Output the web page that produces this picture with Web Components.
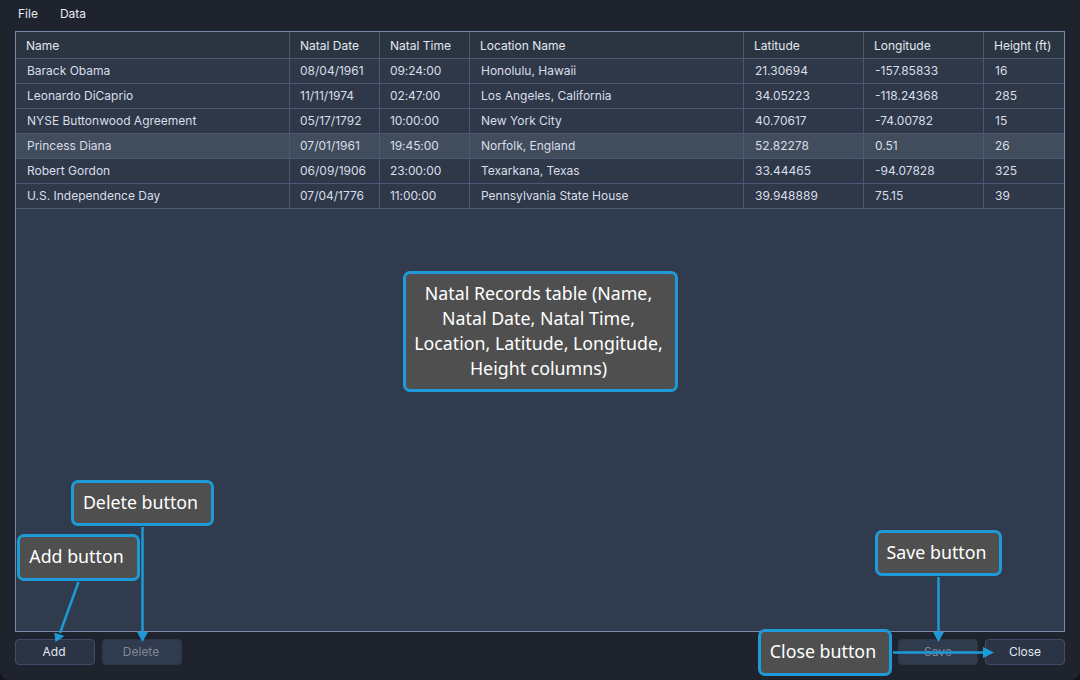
<!DOCTYPE html>
<html lang="en"><head><meta charset="utf-8"><title>Natal Records</title>
<style>
html,body{margin:0;padding:0;width:1080px;height:680px;overflow:hidden;background:#12151a}
</style></head><body>
<app-window>
  <menu-bar slot="menu"><menu-item>File</menu-item><menu-item>Data</menu-item></menu-bar>
  <records-table slot="table"></records-table>
  <app-button slot="left">Add</app-button>
  <app-button slot="left" disabled>Delete</app-button>
  <app-button slot="right" disabled>Save</app-button>
  <app-button slot="right">Close</app-button>
</app-window>
<annotation-layer></annotation-layer>
<script>
const COLS=[274,90,90,274,120,120,80];
const tpl=(css,html)=>`<style>${css}</style>${html}`;
class Base extends HTMLElement{
  constructor(){super();this.attachShadow({mode:'open'}).innerHTML=this.constructor.markup;}
}
class AppWindow extends Base{static markup=tpl(`
  :host{display:flex;flex-direction:column;box-sizing:border-box;width:1080px;height:680px;background:#1f232d;border-radius:0 0 9px 9px;color:#e3e7ef;font:12px Inter,sans-serif}
  .table{flex:1;display:flex;min-height:0;padding:0 15px}
  .table ::slotted(*){flex:1}
  footer{display:flex;justify-content:space-between;padding:7px 15px 15px}
  .g{display:flex;gap:7px}
`,`<slot name="menu"></slot><div class="table"><slot name="table"></slot></div>
  <footer><div class="g"><slot name="left"></slot></div><div class="g"><slot name="right"></slot></div></footer>`);}
class MenuBar extends Base{static markup=tpl(`:host{display:flex;height:31px;box-sizing:border-box;padding:0 0 5px 7px;align-items:center}`,`<slot></slot>`);}
class MenuItem extends Base{static markup=tpl(`:host{display:block;padding:0 11px;font:12px Inter,sans-serif;color:#e6e9f0}`,`<slot></slot>`);}
class AppButton extends Base{static markup=tpl(`
  :host{display:flex;align-items:center;justify-content:center;box-sizing:border-box;width:80px;height:26px;padding-bottom:2px;border:1px solid #414e68;border-radius:4px;background:#2a3444;color:#e3e7ef;font:12px Inter,sans-serif}
  :host([slot=left]){padding-right:2px}
  :host([disabled]){background:#303b4d;border-color:#2c3646;color:#7f8896}
`,`<slot></slot>`);}
class RecordRow extends Base{static markup=tpl(`
  :host{display:grid;grid-template-columns:var(--cols);height:25px;box-sizing:border-box;border-bottom:1px solid #4b5774;background:#2e3848;color:#d9dee8;--pb:2px}
  :host([head]){height:27px;background:#2b3542;color:#e3e7ef;--pb:0px}
  :host([selected]){background:#414c5c}
`,`<slot></slot>`);}
class RecordCell extends Base{static markup=tpl(`
  :host{display:flex;align-items:center;box-sizing:border-box;padding-left:var(--pad,10px);padding-bottom:var(--pb);border-right:1px solid #4b5774;font:12px Inter,sans-serif;white-space:nowrap;overflow:hidden;letter-spacing:var(--ls,0)}
  :host(:last-child){border-right:0}
`,`<slot></slot>`);}
class RecordsTable extends Base{
  static markup=tpl(`:host{display:block;box-sizing:border-box;border:1px solid #7987a8;background:#303b4d;--cols:${COLS.map(c=>c+'px').join(' ')}}`,`<slot></slot>`);
  connectedCallback(){
    const H=['Name','Natal Date','Natal Time','Location Name','Latitude','Longitude','Height (ft)'];
    const R=[['Barack Obama','08/04/1961','09:24:00','Honolulu, Hawaii','21.30694','-157.85833','16'],
    ['Leonardo DiCaprio','11/11/1974','02:47:00','Los Angeles, California','34.05223','-118.24368','285'],
    ['NYSE Buttonwood Agreement','05/17/1792','10:00:00','New York City','40.70617','-74.00782','15'],
    ['Princess Diana','07/01/1961','19:45:00','Norfolk, England','52.82278','0.51','26'],
    ['Robert Gordon','06/09/1906','23:00:00','Texarkana, Texas','33.44465','-94.07828','325'],
    ['U.S. Independence Day','07/04/1776','11:00:00','Pennsylvania State House','39.948889','75.15','39']];
    const cells=(a,row)=>a.map((t,i)=>{
      const narrow=row&&(i==1||i==2);
      return `<record-cell style="--pad:${row&&!narrow?11:10}px${row&&i==2?';--ls:-.1px':''}">${t}</record-cell>`;
    }).join('');
    this.innerHTML=`<record-row head>${cells(H,0)}</record-row>`+R.map((r,i)=>`<record-row${i==3?' selected':''}>${cells(r,1)}</record-row>`).join('');
  }
}
class CalloutBox extends Base{static markup=tpl(`
  :host{position:absolute;display:flex;align-items:center;justify-content:center;box-sizing:border-box;padding:0 4px 2px 0;border:3px solid #1e9ad8;border-radius:7px;background:#4f4f4f;color:#fff;font:17.8px/25px "Noto Sans","Open Sans",sans-serif;text-align:center;white-space:nowrap}
`,`<slot></slot>`);}
class AnnotationLayer extends Base{
  static markup=tpl(`:host{position:absolute;left:0;top:0;width:1080px;height:680px;display:block}
  svg{position:absolute;left:0;top:0}`,`<svg width="1080" height="680" viewBox="0 0 1080 680" fill="none">
   <g stroke="#1e9ad8" stroke-width="2.5">
    <path d="M78.500 582L60 633"/><path d="M142.500 527V633"/><path d="M938.500 577V633"/><path d="M893 652.500H984"/>
   </g>
   <g fill="#1e9ad8">
    <path d="M55.500 642L54.300 632.800L64.500 636Z"/><path d="M142.500 642L137 632H148Z"/><path d="M938.500 642L933 632H944Z"/><path d="M994 652.500L983 647V658Z"/>
   </g></svg><slot></slot>`);
  connectedCallback(){
    const B=[[403,271,275,121,'Natal Records table (Name,<br>Natal Date, Natal Time,<br>Location, Latitude, Longitude,<br>Height columns)'],
    [71,480,143,46,'Delete button'],[17,534,123,47,'Add button'],[875,530,127,46,'Save button'],[758,629,134,47,'Close button']];
    this.innerHTML=B.map(b=>`<callout-box style="left:${b[0]}px;top:${b[1]}px;width:${b[2]}px;height:${b[3]}px">${b[4]}</callout-box>`).join('');
  }
}
customElements.define('app-window',AppWindow);
customElements.define('menu-bar',MenuBar);
customElements.define('menu-item',MenuItem);
customElements.define('app-button',AppButton);
customElements.define('record-row',RecordRow);
customElements.define('record-cell',RecordCell);
customElements.define('records-table',RecordsTable);
customElements.define('callout-box',CalloutBox);
customElements.define('annotation-layer',AnnotationLayer);
</script>
</body></html>
